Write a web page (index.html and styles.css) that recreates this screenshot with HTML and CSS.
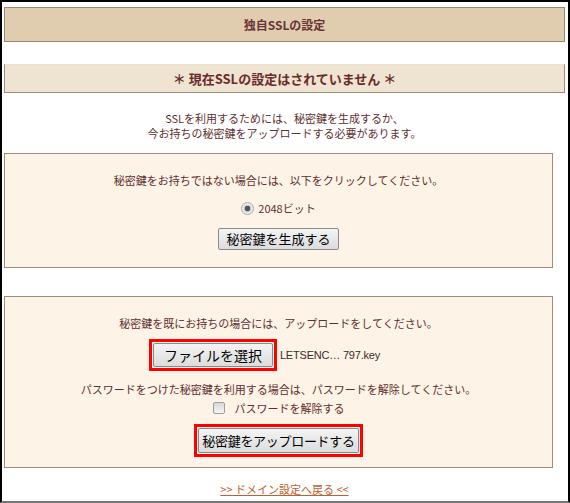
FILE: index.html
```html
<!DOCTYPE html>
<html lang="ja">
<head>
    <meta charset="UTF-8">
    <title>独自SSLの設定</title>
    <link rel="stylesheet" href="styles.css">
</head>
<body>
    <div class="frame">
        <h1 class="title">独自SSLの設定</h1>
        <div class="status">＊ 現在SSLの設定はされていません ＊</div>

        <p class="lead">SSLを利用するためには、秘密鍵を生成するか、<br>今お持ちの秘密鍵をアップロードする必要があります。</p>

        <div class="panel panel-gen">
            <p class="msg">秘密鍵をお持ちではない場合には、以下をクリックしてください。</p>
            <label class="opt"><span class="radio"></span>2048ビット</label>
            <div class="row"><button type="button" class="btn">秘密鍵を生成する</button></div>
        </div>

        <div class="panel panel-up">
            <p class="msg">秘密鍵を既にお持ちの場合には、アップロードをしてください。</p>
            <div class="file-row">
                <span class="mark"><button type="button" class="btn btn-file">ファイルを選択</button></span>
                <span class="file-name">LETSENC… 797.key</span>
            </div>
            <p class="msg msg-pass">パスワードをつけた秘密鍵を利用する場合は、パスワードを解除してください。</p>
            <label class="opt opt-check"><span class="check"></span>パスワードを解除する</label>
            <div class="row"><span class="mark"><button type="button" class="btn btn-up">秘密鍵をアップロードする</button></span></div>
        </div>

        <p class="back"><a href="#">&gt;&gt; ドメイン設定へ戻る &lt;&lt;</a></p>
    </div>
</body>
</html>
```

FILE: styles.css
```css
body { margin: 0; font-family: "Noto Sans CJK JP", "Noto Sans", sans-serif; font-size: 11px; color: #5e2f2f; background: #fff; }
.frame {
    box-sizing: border-box;
    width: 570px; height: 503px;
    border: 2px solid #000; border-bottom-color: #777;
    padding: 5px 3px 0 2px;
}
.title {
    margin: 0; height: 33px; line-height: 33px;
    background-color: #e0cdb0;
    border: 1px solid #9c8672;
    text-align: center;
    font-size: 12px; font-weight: bold; color: #6a3434;
}
.status {
    margin-top: 22px; height: 27px; line-height: 27px;
    background-color: #efe3d1;
    border: 1px solid #a08a78; border-top-color: #ece0cc;
    text-align: center;
    font-size: 13px; font-weight: bold; color: #6b2b2b;
}
.lead { margin: 18px 0 0; line-height: 15px; text-align: center; }
.panel {
    margin-right: 12px;
    background-color: #fdf3e6;
    border: 1px solid #a08a78;
    text-align: center;
}
.panel-gen { margin-top: 12px; padding: 18px 0 17px; }
.panel-up { margin-top: 28px; padding: 18px 0 10px; }
.msg { margin: 0; line-height: 16px; }
.opt { display: flex; justify-content: center; align-items: center; gap: 4px; margin-top: 12px; height: 16px; }
.radio {
    width: 11px; height: 11px; border-radius: 50%;
    border: 1px solid #a8a8a8;
    background: radial-gradient(circle, #555 0 2.5px, #bbb 3px, #e8e8e8 4px, #f4f4f4);
}
.check {
    width: 10px; height: 10px; border-radius: 2px;
    border: 1px solid #a0a0a0;
    background: linear-gradient(#d8d8d8, #f6f6f6);
    margin-right: 6px;
}
.row { display: flex; justify-content: center; margin-top: 8px; }
.panel-gen .row { margin-top: 12px; }
.btn {
    font-family: "Noto Sans CJK JP", sans-serif;
    font-size: 13px; color: #000;
    padding: 0 7px; height: 22px; line-height: 20px;
    background: linear-gradient(#f4f4f4, #dcdcdc);
    border: 1px solid #8a8a8a; border-radius: 2px;
}
.mark { display: inline-block; border: 3px solid #f00; padding: 1px; line-height: 0; }
.file-row { display: flex; justify-content: center; align-items: center; gap: 3px; margin-top: 8px; margin-right: 28px; }
.btn-file { font-size: 14px; height: 24px; line-height: 22px; padding: 0 10px; }
.file-name { font-family: "Liberation Sans", sans-serif; font-size: 11px; color: #3e2a2a; letter-spacing: -0.2px; }
.msg-pass { margin-top: 10px; }
.opt-check { margin-top: 3px; }
.btn-up { height: 25px; line-height: 23px; padding: 0 3px; letter-spacing: -0.3px; }
.back { margin: 13px 0 0; text-align: center; line-height: 16px; }
.back a { color: #c0602e; }
```
